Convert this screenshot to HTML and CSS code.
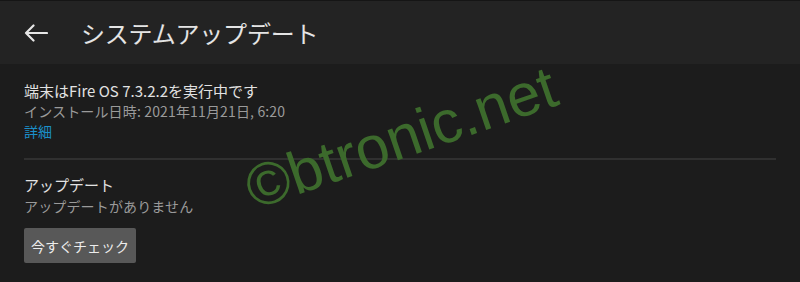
FILE: index.html
```html
<!DOCTYPE html>
<html lang="ja">
<head>
<meta charset="utf-8">
<link rel="stylesheet" href="styles.css">
</head>
<body>
<div class="app">
  <header class="bar">
    <svg class="back" width="24" height="18" viewBox="0 0 24 18" aria-hidden="true">
      <path d="M23 9H2M9.5 1.5L2 9l7.5 7.5" fill="none" stroke="#e6e6e6" stroke-width="2.2" stroke-linecap="round" stroke-linejoin="round"/>
    </svg>
    <h1 class="title">システムアップデート</h1>
  </header>
  <main class="content">
    <section class="info">
      <p class="primary">端末はFire OS 7.3.2.2を実行中です</p>
      <p class="secondary">インストール日時: 2021年11月21日, 6:20</p>
      <a class="link">詳細</a>
    </section>
    <hr class="divider">
    <section class="update">
      <p class="primary">アップデート</p>
      <p class="secondary">アップデートがありません</p>
      <button class="btn">今すぐチェック</button>
    </section>
  </main>
  <div class="watermark">©btronic.net</div>
</div>
</body>
</html>
```
FILE: styles.css
```css
html, body {
  margin: 0;
  padding: 0;
  background: #1c1c1c;
}
body {
  font-family: "Noto Sans CJK JP", "Noto Sans", sans-serif;
  color: #e2e2e2;
  width: 800px;
  height: 282px;
  overflow: hidden;
}
.app {
  position: relative;
  width: 800px;
  height: 282px;
}
.bar {
  height: 63px;
  background: #232323;
  border-top: 1px solid #151515;
  display: flex;
  align-items: center;
  padding-left: 24px;
}
.back {
  display: block;
  margin-top: 1px;
}
.title {
  margin: 0 0 0 33px;
  font-size: 24px;
  font-weight: 400;
  line-height: 30px;
  color: #e4e4e4;
  letter-spacing: -0.2px;
}
.content {
  padding: 0 24px;
}
.info {
  padding-top: 16px;
  display: flex;
  flex-direction: column;
  align-items: flex-start;
}
.primary {
  margin: 0;
  font-size: 15px;
  line-height: 21px;
  color: #e2e2e2;
}
.secondary {
  margin: 0;
  font-size: 14px;
  line-height: 20px;
  color: #9a9a9a;
  letter-spacing: 0.15px;
}
.link {
  font-size: 14px;
  line-height: 20px;
  color: #1b8fc9;
}
.divider {
  margin: 17px 0 0;
  border: 0;
  height: 2px;
  background: #303030;
}
.update {
  padding-top: 14px;
  display: flex;
  flex-direction: column;
  align-items: flex-start;
}
.update .secondary {
  line-height: 22px;
}
.btn {
  margin-top: 11px;
  width: 112px;
  height: 35px;
  border: 0;
  border-radius: 2px;
  background: #585858;
  color: #ececec;
  font-family: "Noto Sans CJK JP", "Noto Sans", sans-serif;
  font-size: 14px;
  padding: 0;
}
.watermark {
  position: absolute;
  left: 239px;
  top: 108px;
  width: 324px;
  height: 60px;
  font-family: "Liberation Sans", Arial, sans-serif;
  font-size: 60px;
  line-height: 60px;
  color: #3c6a2c;
  white-space: nowrap;
  text-align: center;
  transform: rotate(-19deg);
  pointer-events: none;
}
```
